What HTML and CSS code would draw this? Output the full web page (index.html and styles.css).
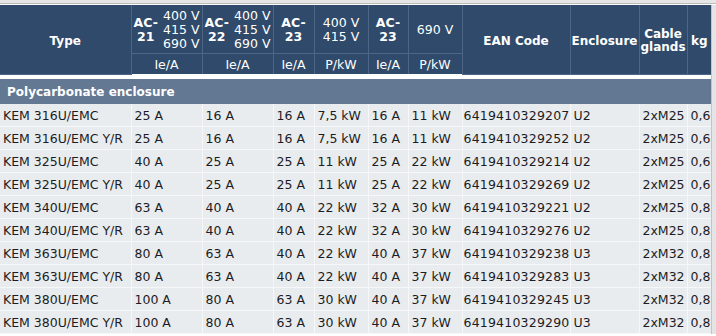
FILE: index.html
```html
<!DOCTYPE html>
<html>
<head>
<meta charset="utf-8">
<link rel="stylesheet" href="styles.css">
</head>
<body>
<div class="topbar"></div>
<div class="page">
<table class="grid">
  <colgroup>
    <col class="c-type"><col class="c-ac"><col class="c-ac"><col class="c-ac23"><col class="c-pkw"><col class="c-ac23b"><col class="c-pkw">
    <col class="c-ean"><col class="c-enc"><col class="c-cab"><col class="c-kg">
  </colgroup>
  <thead>
    <tr class="h1">
      <th rowspan="2" class="main">Type</th>
      <th class="acv"><div class="acwrap"><span class="ac">AC-<br>21</span><span class="volts">400 V<br>415 V<br>690 V</span></div></th>
      <th class="acv"><div class="acwrap"><span class="ac">AC-<br>22</span><span class="volts">400 V<br>415 V<br>690 V</span></div></th>
      <th class="ac1">AC-<br>23</th>
      <th class="vv">400 V<br>415 V</th>
      <th class="ac1">AC-<br>23</th>
      <th class="vv">690 V</th>
      <th rowspan="2" class="main">EAN Code</th>
      <th rowspan="2" class="main">Enclosure</th>
      <th rowspan="2" class="main tight">Cable glands</th>
      <th rowspan="2" class="main">kg</th>
    </tr>
    <tr class="h2">
      <th>Ie/A</th><th>Ie/A</th><th>Ie/A</th><th>P/kW</th><th>Ie/A</th><th>P/kW</th>
    </tr>
  </thead>
  <tbody>
    <tr class="gap"><td colspan="11"></td></tr>
    <tr class="group"><td colspan="11">Polycarbonate enclosure</td></tr>
    <tr><td>KEM 316U/EMC</td><td>25 A</td><td>16 A</td><td>16 A</td><td>7,5 kW</td><td>16 A</td><td>11 kW</td><td class="ean">6419410329207</td><td>U2</td><td>2xM25</td><td>0,6</td></tr>
    <tr><td>KEM 316U/EMC Y/R</td><td>25 A</td><td>16 A</td><td>16 A</td><td>7,5 kW</td><td>16 A</td><td>11 kW</td><td class="ean">6419410329252</td><td>U2</td><td>2xM25</td><td>0,6</td></tr>
    <tr><td>KEM 325U/EMC</td><td>40 A</td><td>25 A</td><td>25 A</td><td>11 kW</td><td>25 A</td><td>22 kW</td><td class="ean">6419410329214</td><td>U2</td><td>2xM25</td><td>0,6</td></tr>
    <tr><td>KEM 325U/EMC Y/R</td><td>40 A</td><td>25 A</td><td>25 A</td><td>11 kW</td><td>25 A</td><td>22 kW</td><td class="ean">6419410329269</td><td>U2</td><td>2xM25</td><td>0,6</td></tr>
    <tr><td>KEM 340U/EMC</td><td>63 A</td><td>40 A</td><td>40 A</td><td>22 kW</td><td>32 A</td><td>30 kW</td><td class="ean">6419410329221</td><td>U2</td><td>2xM25</td><td>0,8</td></tr>
    <tr><td>KEM 340U/EMC Y/R</td><td>63 A</td><td>40 A</td><td>40 A</td><td>22 kW</td><td>32 A</td><td>30 kW</td><td class="ean">6419410329276</td><td>U2</td><td>2xM25</td><td>0,8</td></tr>
    <tr><td>KEM 363U/EMC</td><td>80 A</td><td>63 A</td><td>40 A</td><td>22 kW</td><td>40 A</td><td>37 kW</td><td class="ean">6419410329238</td><td>U3</td><td>2xM32</td><td>0,8</td></tr>
    <tr><td>KEM 363U/EMC Y/R</td><td>80 A</td><td>63 A</td><td>40 A</td><td>22 kW</td><td>40 A</td><td>37 kW</td><td class="ean">6419410329283</td><td>U3</td><td>2xM32</td><td>0,8</td></tr>
    <tr><td>KEM 380U/EMC</td><td>100 A</td><td>80 A</td><td>63 A</td><td>30 kW</td><td>40 A</td><td>37 kW</td><td class="ean">6419410329245</td><td>U3</td><td>2xM32</td><td>0,8</td></tr>
    <tr><td>KEM 380U/EMC Y/R</td><td>100 A</td><td>80 A</td><td>63 A</td><td>30 kW</td><td>40 A</td><td>37 kW</td><td class="ean">6419410329290</td><td>U3</td><td>2xM32</td><td>0,8</td></tr>
  </tbody>
</table>
<div class="edge"></div>
</div>
</body>
</html>
```
FILE: styles.css
```css
html, body {
  margin: 0;
  padding: 0;
  background: #ffffff;
  overflow: hidden;
}
body {
  font-family: "DejaVu Sans", Verdana, sans-serif;
  font-size: 12.5px;
  color: #1c1c24;
}
.topbar {
  height: 3px;
  background: #e6e6e6;
  border-bottom: 1px solid #bcbcbc;
  margin-bottom: 1px;
}
.page {
  display: flex;
  align-items: stretch;
}
.edge {
  flex: 1;
  background: #e4e4e4;
  border-left: 1px solid #c4c4c4;
}
.grid {
  border-collapse: collapse;
  table-layout: fixed;
  width: 711px;
  flex: none;
}
.c-type { width: 131px; }
.c-ac { width: 71px; }
.c-ac23 { width: 41px; }
.c-pkw { width: 54px; }
.c-ac23b { width: 40px; }
.c-ean { width: 108px; }
.c-enc { width: 69px; }
.c-cab { width: 48px; }
.c-kg { width: 24px; }

thead th {
  background: #2f4a6a;
  color: #ffffff;
  border: 1px solid #4e6686;
  border-top: none;
  padding: 0;
  font-weight: normal;
  font-size: 12.5px;
  line-height: 14px;
  white-space: nowrap;
}
thead th:first-child { border-left: none; }
thead th:last-child { border-right: none; }
.h1 th { height: 47px; padding-top: 1px; }
.h2 th { height: 18px; border-bottom: none; padding-top: 2px; }
th.main { font-weight: bold; font-size: 12px; padding-top: 3px; }
th.tight { white-space: normal; line-height: 13px; }
th.ac1 { font-weight: bold; }
.acwrap {
  display: flex;
  align-items: center;
  justify-content: space-between;
  padding: 0 2px 0 2px;
}
.ac { font-weight: bold; text-align: center; }
.volts { text-align: right; }

.gap td {
  height: 4px;
  padding: 0;
  background: #ffffff;
  border: none;
}
.group td {
  height: 24px;
  padding: 1px 0 0 7px;
  background: #637893;
  color: #ffffff;
  font-weight: bold;
  font-size: 12px;
  border: none;
}
tbody td {
  height: 21px;
  padding: 1px 0 0 3px;
  background: #e9ecef;
  border-bottom: 1px solid #f6f7f8;
  border-right: 1px solid #f6f7f8;
  white-space: nowrap;
  overflow: hidden;
}
tbody td.ean { padding-left: 1px; letter-spacing: 0.2px; }
tbody td:last-child { border-right: none; }
```
